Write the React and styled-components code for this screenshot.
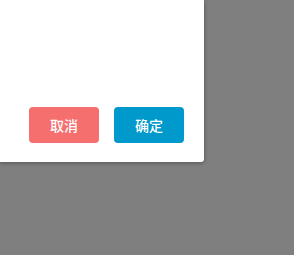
import React from "react";
import styled, { createGlobalStyle } from "styled-components";

const Global = createGlobalStyle`
  html, body { margin: 0; padding: 0; }
  body { background: #7f7f7f; width: 294px; height: 255px; overflow: hidden; font-family: "Noto Sans CJK SC", "Noto Sans", sans-serif; }
`;

const Panel = styled.div`
  width: 204px;
  height: 162px;
  background: #ffffff;
  border-radius: 0 0 3px 0;
  box-shadow: 0 1px 4px rgba(0, 0, 0, 0.35);
  display: flex;
  flex-direction: column;
  justify-content: flex-end;
  box-sizing: border-box;
  padding: 0 20px 19px 0;
`;

const Footer = styled.div`
  display: flex;
  justify-content: flex-end;
  gap: 15px;
`;

const Button = styled.button`
  width: 70px;
  height: 36px;
  border: none;
  border-radius: 4px;
  background: ${(p) => (p.$variant === "danger" ? "#f56f6f" : "#0099cc")};
  color: #ffffff;
  font-family: "Noto Sans CJK SC", "Noto Sans", sans-serif;
  font-size: 14px;
  font-weight: 500;
  padding: 0;
  cursor: pointer;
`;

export default function App() {
  return (
    <>
      <Global />
      <Panel>
        <Footer>
          <Button $variant="danger">取消</Button>
          <Button $variant="primary">确定</Button>
        </Footer>
      </Panel>
    </>
  );
}
